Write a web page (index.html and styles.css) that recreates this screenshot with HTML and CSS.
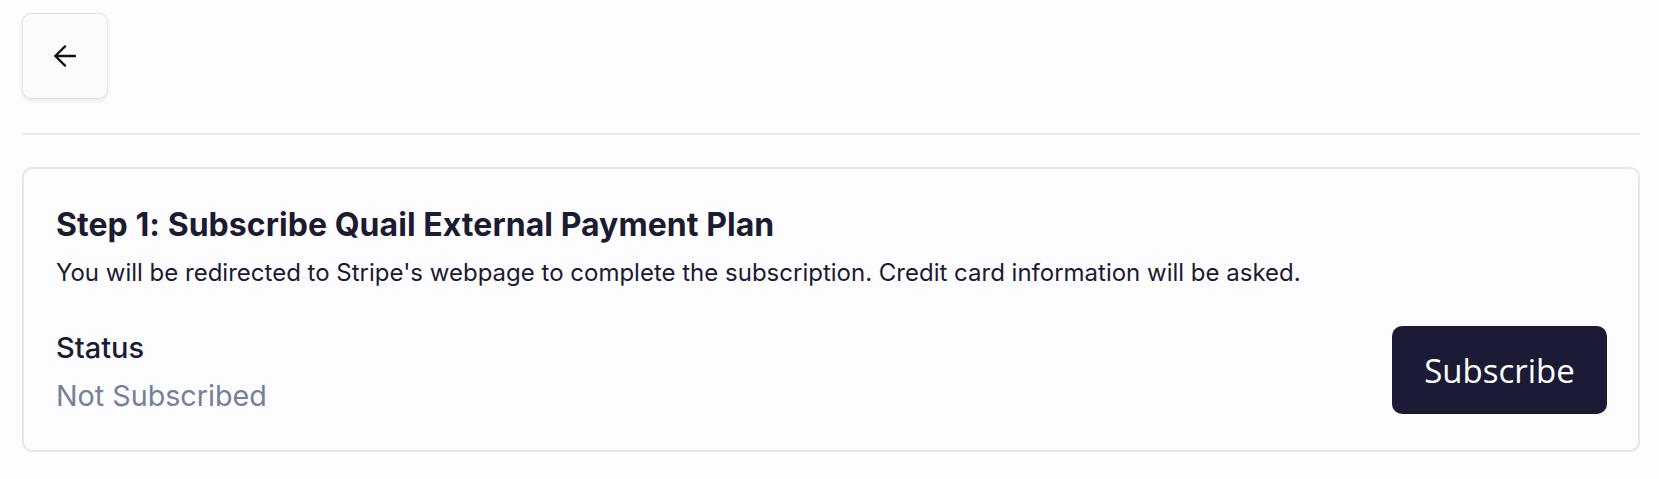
FILE: index.html
```html
<!DOCTYPE html>
<html lang="en">
<head>
<meta charset="utf-8">
<title>Subscription</title>
<link rel="stylesheet" href="styles.css">
</head>
<body>
<div class="page">
  <div class="topbar">
    <button class="back-btn" aria-label="Back">
      <svg width="24" height="24" viewBox="0 0 24 24" fill="none" stroke="#111" stroke-width="2.5" stroke-linecap="round" stroke-linejoin="round">
        <path d="M23 12H1.5"/>
        <path d="M12 1.5L1.5 12L12 22.5"/>
      </svg>
    </button>
  </div>
  <hr class="divider">
  <section class="card">
    <h2 class="card-title">Step 1: Subscribe Quail External Payment Plan</h2>
    <p class="card-desc">You will be redirected to Stripe's webpage to complete the subscription. Credit card information will be asked.</p>
    <div class="card-row">
      <div class="status">
        <div class="status-label">Status</div>
        <div class="status-value">Not Subscribed</div>
      </div>
      <button class="subscribe-btn">Subscribe</button>
    </div>
  </section>
</div>
</body>
</html>
```

FILE: styles.css
```css
html, body {
  margin: 0;
  padding: 0;
  background: #fdfdfe;
}
body {
  font-family: Inter, "Noto Sans", sans-serif;
  color: #1b1b31;
}
.page {
  padding: 13px 19px 0 22px;
}
.topbar {
  display: flex;
}
.back-btn {
  width: 86px;
  height: 86px;
  display: flex;
  align-items: center;
  justify-content: center;
  background: #fbfbfc;
  border: 1.5px solid #e2e2e6;
  border-radius: 9px;
  box-shadow: 0 2px 5px rgba(0,0,0,0.08);
  padding: 0;
  cursor: pointer;
}
.back-btn svg {
  width: 22px;
  height: 22px;
}
.divider {
  border: 0;
  height: 2px;
  background: #eaeaed;
  margin: 34px 0 32px 0;
}
.card {
  background: #fdfdff;
  border: 2px solid #e6e6ea;
  border-radius: 10px;
  padding: 36px 31px 34.5px 32px;
}
.card-title {
  margin: 0;
  font-size: 32px;
  font-weight: 700;
  line-height: 39px;
  letter-spacing: 0.05px;
}
.card-desc {
  margin: 13px 0 0 0;
  font-size: 24px;
  line-height: 32px;
}
.card-row {
  display: flex;
  align-items: flex-start;
  justify-content: space-between;
  margin-top: 37px;
}
.status {
  padding-top: 3.5px;
}
.status-label {
  font-size: 29px;
  font-weight: 500;
  line-height: 36px;
}
.status-value {
  font-size: 28.7px;
  line-height: 40px;
  margin-top: 10px;
  color: #738197;
}
.subscribe-btn {
  width: 215px;
  height: 88px;
  background: #1b1b35;
  color: #ffffff;
  border: 0;
  border-radius: 10px;
  font-family: "Open Sans", sans-serif;
  font-size: 33px;
  cursor: pointer;
}
```
